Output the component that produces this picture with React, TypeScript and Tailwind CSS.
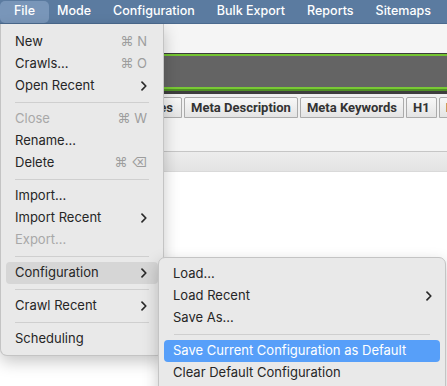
import React from "react";

type Item =
  | { kind: "item"; label: string; shortcut?: string; sub?: boolean; disabled?: boolean; active?: "gray" | "blue" }
  | { kind: "sep" };

const fileMenu: Item[] = [
  { kind: "item", label: "New", shortcut: "⌘ N" },
  { kind: "item", label: "Crawls...", shortcut: "⌘ O" },
  { kind: "item", label: "Open Recent", sub: true },
  { kind: "sep" },
  { kind: "item", label: "Close", shortcut: "⌘ W", disabled: true },
  { kind: "item", label: "Rename..." },
  { kind: "item", label: "Delete", shortcut: "⌘ ⌫" },
  { kind: "sep" },
  { kind: "item", label: "Import..." },
  { kind: "item", label: "Import Recent", sub: true },
  { kind: "item", label: "Export...", disabled: true },
  { kind: "sep" },
  { kind: "item", label: "Configuration", sub: true, active: "gray" },
  { kind: "sep" },
  { kind: "item", label: "Crawl Recent", sub: true },
  { kind: "sep" },
  { kind: "item", label: "Scheduling" },
];

const configMenu: Item[] = [
  { kind: "item", label: "Load..." },
  { kind: "item", label: "Load Recent", sub: true },
  { kind: "item", label: "Save As..." },
  { kind: "sep" },
  { kind: "item", label: "Save Current Configuration as Default", active: "blue" },
  { kind: "item", label: "Clear Default Configuration" },
];

const topMenus = ["File", "Mode", "Configuration", "Bulk Export", "Reports", "Sitemaps"];

const tabs = ["Meta Description", "Meta Keywords", "H1", "H2"];

function Chevron({ white }: { white?: boolean }) {
  return (
    <svg width="6" height="10" viewBox="0 0 6 10" className="shrink-0">
      <path
        d="M1 1.2 L4.8 5 L1 8.8"
        fill="none"
        stroke={white ? "#fff" : "#2a2a2a"}
        strokeWidth="1.7"
        strokeLinecap="round"
        strokeLinejoin="round"
      />
    </svg>
  );
}

function MenuList({ items, sepClass, rightPad }: { items: Item[]; sepClass: string; rightPad: string }) {
  return (
    <>
      {items.map((it, i) => {
        if (it.kind === "sep") {
          return (
            <div key={i} className="flex h-[11px] items-center">
              <div className={`h-px flex-1 bg-[#cfcfcf] ${sepClass}`} />
            </div>
          );
        }
        const bg =
          it.active === "gray" ? "bg-[#d6d6d6]" : it.active === "blue" ? "bg-[#579ff9]" : "";
        const color = it.disabled ? "text-[#a8a8a8]" : it.active === "blue" ? "text-white" : "text-[#262626]";
        return (
          <div
            key={i}
            className={`mx-[5px] flex h-[22px] items-center rounded-[4px] pl-[9px] ${rightPad} ${bg} ${color}`}
          >
            <span className="flex-1 whitespace-nowrap">{it.label}</span>
            {it.shortcut && <span className="text-[#9d9d9d]">{it.shortcut}</span>}
            {it.sub && <Chevron white={it.active === "blue"} />}
          </div>
        );
      })}
    </>
  );
}

export default function App() {
  return (
    <div
      className="relative h-[386px] w-[447px] overflow-hidden bg-white text-[13px]"
      style={{ fontFamily: "Inter, 'Noto Sans', 'DejaVu Sans', sans-serif" }}
    >
      {/* menu bar */}
      <div className="flex h-[24px] items-center border-b border-[#4b6a8e] bg-[#5b7ba0] text-[12.5px] font-medium text-white">
        {topMenus.map((m, i) => (
          <div
            key={m}
            className={`flex h-[22px] shrink-0 items-center whitespace-nowrap rounded-[5px] ${
              i === 0 ? "w-[49px] justify-center bg-[#7996b9]" : "px-[11px]"
            } ${i === 1 ? "ml-[-3px]" : ""}`}
          >
            {m}
          </div>
        ))}
      </div>

      {/* app background */}
      <div className="h-[29px] bg-[#f5f5f5]" />
      <div className="h-px bg-[#3c3c3c]" />
      <div className="h-[2px] bg-[#74c431]" />
      <div className="h-[31px] bg-[#646464]" />
      <div className="h-[2px] bg-[#78c934]" />
      <div className="h-[2px] bg-[#4f8f25]" />
      <div className="h-[3px] bg-[#3e3e3e]" />
      <div className="h-[3px] bg-[#f0f0f0]" />

      <div
        className="flex h-[21px] items-stretch gap-[2px] bg-[#f0f0f0] text-[13px] font-bold text-[#333]"
        style={{ fontFamily: "Roboto, 'Liberation Sans', sans-serif" }}
      >
        <div className="ml-[88px] flex w-[94px] shrink-0 items-center justify-end rounded-t-[2px] border border-[#ababab] bg-gradient-to-b from-[#f7f7f7] to-[#e4e4e4] pr-[8px]">
          Page Titles
        </div>
        {tabs.map((t) => (
          <div
            key={t}
            className="flex shrink-0 items-center whitespace-nowrap rounded-t-[2px] border border-[#ababab] bg-gradient-to-b from-[#f7f7f7] to-[#e4e4e4] px-[6px]"
          >
            {t}
          </div>
        ))}
      </div>
      <div className="h-[33px] bg-[#f4f4f4]" />
      <div className="h-px bg-[#c6c6c6]" />
      <div className="h-[20px] border-b border-[#d9d9d9] bg-gradient-to-b from-[#ededed] to-[#e3e3e3]" />

      {/* File menu */}
      <div className="absolute left-0 top-[24px] w-[164px] rounded-b-[7px] border border-t-0 border-[#c4c4c4] bg-[#e9e9e9] pb-[5px] pt-[7px] shadow-[0_6px_16px_rgba(0,0,0,0.22)]">
        <MenuList items={fileMenu} sepClass="mx-[14px]" rightPad="pr-[11px]" />
      </div>

      {/* Configuration submenu */}
      <div className="absolute left-[158px] top-[257px] w-[288px] rounded-[7px] border border-[#c4c4c4] bg-[#e9e9e9] pb-[12px] pt-[5px] shadow-[0_6px_16px_rgba(0,0,0,0.22)]">
        <MenuList items={configMenu} sepClass="mx-[15px]" rightPad="pr-[8px]" />
      </div>
    </div>
  );
}
